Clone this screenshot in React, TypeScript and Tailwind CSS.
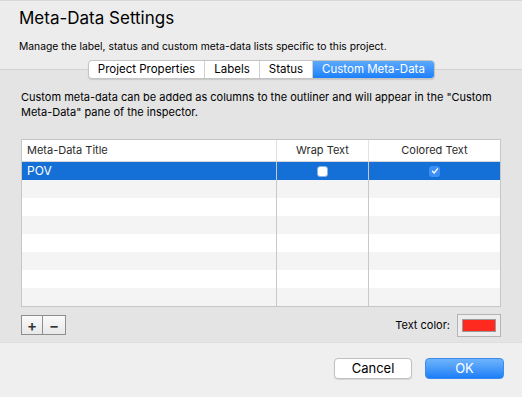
import React from "react";

const font = { fontFamily: "Inter, 'Helvetica Neue', 'Liberation Sans', sans-serif" };

const tabs = ["Project Properties", "Labels", "Status", "Custom Meta-Data"];

function CheckBox({ checked }: { checked: boolean }) {
  if (checked) {
    return (
      <div className="flex h-[11px] w-[11px] items-center justify-center rounded-[3px] bg-[#3d8ff5]">
        <svg width="8" height="8" viewBox="0 0 8 8">
          <path d="M1.5 4.2 L3.2 6 L6.5 1.8" fill="none" stroke="white" strokeWidth="1.3" strokeLinecap="round" strokeLinejoin="round" />
        </svg>
      </div>
    );
  }
  return <div className="h-[11px] w-[11px] rounded-[3px] border border-[#8ab3e8] bg-white" />;
}

export default function App() {
  const rows = [0, 1, 2, 3, 4, 5, 6, 7];

  return (
    <div className="flex h-[397px] w-[522px] flex-col overflow-hidden bg-[#ececec] text-[#1a1a1a]" style={font}>
      {/* header */}
      <div className="relative h-[69px] shrink-0 border-t border-[#d8d8d8] px-[19px]">
        <div className="pt-[7px] text-[17px] leading-[21px] text-black">Meta-Data Settings</div>
        <div className="mt-[10px] text-[10.3px] leading-[14px] text-black">
          Manage the label, status and custom meta-data lists specific to this project.
        </div>
        <div className="absolute left-[88px] top-[59px] flex h-[19px] overflow-hidden rounded-[4px] border border-[#c4c4c4] bg-white text-[11.5px] leading-[17px] shadow-[0_1px_1px_rgba(0,0,0,0.12)]">
          {tabs.map((t, i) =>
            i === 3 ? (
              <div key={t} className="w-[121px] bg-gradient-to-b from-[#5ba9fc] to-[#1a80fb] text-center text-white">
                {t}
              </div>
            ) : (
              <div
                key={t}
                className={
                  "border-r border-[#d0d0d0] text-center text-black " +
                  (i === 0 ? "w-[116px]" : i === 1 ? "w-[55px]" : "w-[53px]")
                }
              >
                {t}
              </div>
            )
          )}
        </div>
      </div>

      {/* body */}
      <div className="flex h-[273px] shrink-0 flex-col border-t border-[#d2d2d2] bg-[#e4e4e4] px-[21px]">
        <div className="mt-[20px] text-[11px] leading-[15px] text-black">
          Custom meta-data can be added as columns to the outliner and will appear in the "Custom Meta-Data" pane of the inspector.
        </div>

        <div className="mt-[19px] w-[480px] border border-[#c6c6c6] bg-white">
          <div className="flex h-[22px] border-b border-[#d6d6d6] text-[11px] leading-[21px] text-[#2a2a2a]">
            <div className="w-[255px] border-r border-[#e2e2e2] pl-[5px]">Meta-Data Title</div>
            <div className="w-[92px] border-r border-[#e2e2e2] text-center">Wrap Text</div>
            <div className="flex-1 text-center">Colored Text</div>
          </div>
          {rows.map((r) => {
            const selected = r === 0;
            const bg = selected ? "bg-[#1470d6]" : r % 2 === 1 ? "bg-[#f4f4f4]" : "bg-white";
            return (
              <div key={r} className={"flex h-[18px] text-[12px] leading-[18px] " + bg}>
                <div className="w-[255px] border-r border-[#c8c8c8] pl-[5px] text-white">{selected ? "POV" : ""}</div>
                <div className="flex w-[92px] items-center justify-center border-r border-[#c8c8c8]">
                  {selected && <CheckBox checked={false} />}
                </div>
                <div className="flex flex-1 items-center justify-center">
                  {selected && <CheckBox checked={true} />}
                </div>
              </div>
            );
          })}
        </div>

        <div className="mt-[7px] flex items-start justify-between">
          <div className="mt-[1px] flex h-[20px] border border-[#8e8e8e] bg-gradient-to-b from-[#fafafa] to-[#e8e8e8]">
            <div className="flex w-[21px] items-center justify-center border-r border-[#8e8e8e] text-[15px] font-semibold leading-none text-[#333]">
              +
            </div>
            <div className="flex w-[22px] items-center justify-center text-[15px] font-semibold leading-none text-[#333]">
              −
            </div>
          </div>
          <div className="flex items-center gap-[7px]">
            <span className="text-[11px] text-black">Text color:</span>
            <div className="flex h-[23px] w-[44px] items-center justify-center border border-[#b4b4b4] bg-[#ededed]">
              <div className="h-[13px] w-[34px] border border-[#9a9a9a] bg-[#ff2a1f]" />
            </div>
          </div>
        </div>
      </div>

      {/* footer */}
      <div className="flex flex-1 justify-end gap-[13px] border-t border-[#dedede] bg-[#efefef] pr-[18px] pt-[15px]">
        <div className="h-[21px] w-[78px] rounded-[4px] border border-[#bfbfbf] bg-white text-center text-[13px] leading-[19px] text-black shadow-[0_1px_1px_rgba(0,0,0,0.1)]">
          Cancel
        </div>
        <div className="h-[21px] w-[79px] rounded-[4px] border border-[#3a8cf0] bg-gradient-to-b from-[#6db4fb] to-[#1a7ef7] text-center text-[13px] leading-[19px] text-white">
          OK
        </div>
      </div>
    </div>
  );
}
